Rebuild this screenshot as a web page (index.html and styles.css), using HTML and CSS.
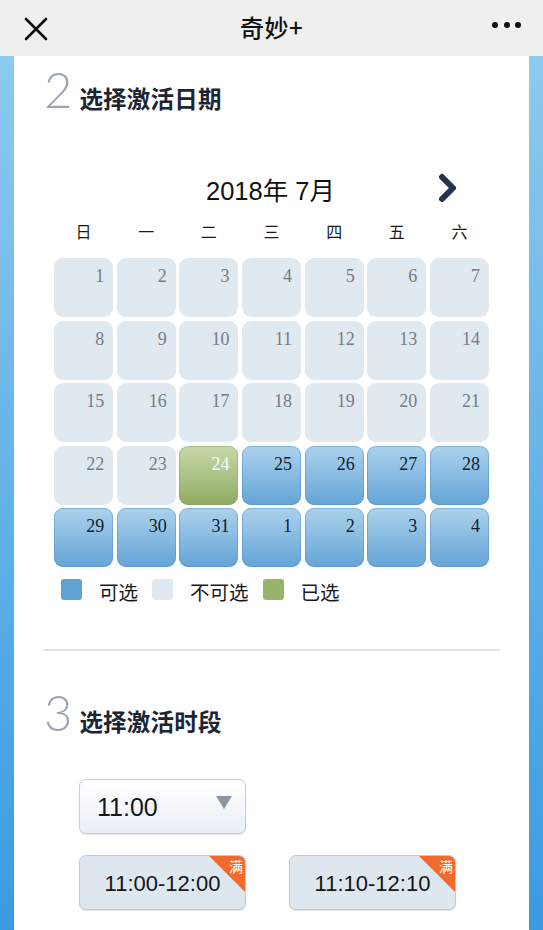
FILE: index.html
```html
<!DOCTYPE html>
<html lang="zh-CN">
<head>
<meta charset="utf-8">
<title>奇妙+</title>
<link rel="stylesheet" href="styles.css">
</head>
<body>
<header class="topbar">
  <svg class="close" width="24" height="24" viewBox="0 0 24 24"><path d="M2 2 L22 22 M22 2 L2 22" stroke="#111" stroke-width="2.6" stroke-linecap="round" fill="none"/></svg>
  <div class="title">奇妙+</div>
  <div class="dots"><i></i><i></i><i></i></div>
</header>
<main class="panel">
  <section class="step step-date">
    <h2 class="step-title"><span class="num">2</span><span class="label">选择激活日期</span></h2>
    <div class="cal">
      <div class="month">
        <span></span>
        <span class="month-text">2018年 7月</span>
        <svg class="next" width="20" height="30" viewBox="0 0 20 30"><path d="M4 4 L15 15 L4 26" stroke="#24344f" stroke-width="6" stroke-linecap="round" stroke-linejoin="round" fill="none"/></svg>
      </div>
      <div class="weekdays">
        <span>日</span><span>一</span><span>二</span><span>三</span><span>四</span><span>五</span><span>六</span>
      </div>
      <div class="days">
        <div class="day off">1</div><div class="day off">2</div><div class="day off">3</div><div class="day off">4</div><div class="day off">5</div><div class="day off">6</div><div class="day off">7</div>
        <div class="day off">8</div><div class="day off">9</div><div class="day off">10</div><div class="day off">11</div><div class="day off">12</div><div class="day off">13</div><div class="day off">14</div>
        <div class="day off">15</div><div class="day off">16</div><div class="day off">17</div><div class="day off">18</div><div class="day off">19</div><div class="day off">20</div><div class="day off">21</div>
        <div class="day off">22</div><div class="day off">23</div><div class="day sel">24</div><div class="day on">25</div><div class="day on">26</div><div class="day on">27</div><div class="day on">28</div>
        <div class="day on">29</div><div class="day on">30</div><div class="day on">31</div><div class="day on">1</div><div class="day on">2</div><div class="day on">3</div><div class="day on">4</div>
      </div>
      <div class="legend">
        <span class="sw sw-on"></span><span class="lg-text">可选</span>
        <span class="sw sw-off"></span><span class="lg-text">不可选</span>
        <span class="sw sw-sel"></span><span class="lg-text">已选</span>
      </div>
    </div>
  </section>
  <div class="divider"></div>
  <section class="step step-time">
    <h2 class="step-title"><span class="num">3</span><span class="label">选择激活时段</span></h2>
    <div class="select">
      <span class="select-val">11:00</span>
      <span class="caret"></span>
    </div>
    <div class="slots">
      <div class="slot"><span class="slot-text">11:00-12:00</span><span class="badge"></span><span class="badge-text">满</span></div>
      <div class="slot"><span class="slot-text">11:10-12:10</span><span class="badge"></span><span class="badge-text">满</span></div>
    </div>
  </section>
</main>
</body>
</html>
```

FILE: styles.css
```css
html, body {
  margin: 0;
  padding: 0;
}
body {
  width: 543px;
  min-height: 930px;
  background: linear-gradient(#93cdf0, #3a9be0);
  font-family: "Noto Sans CJK SC", "Noto Sans", sans-serif;
  color: #1b2533;
}
.topbar {
  height: 56px;
  background: #efefef;
  display: grid;
  grid-template-columns: 1fr auto 1fr;
  align-items: center;
}
.close {
  margin-left: 24px;
  margin-top: 1px;
}
.title {
  font-size: 24px;
  font-weight: 500;
  color: #111;
  line-height: 1;
  letter-spacing: 0.5px;
  margin-top: -2px;
}
.dots {
  justify-self: end;
  display: flex;
  gap: 5.5px;
  margin-right: 22px;
  margin-top: -7px;
}
.dots i {
  width: 6px;
  height: 6px;
  border-radius: 50%;
  background: #111;
  display: block;
}
.panel {
  margin: 0 14px;
  background: #fff;
  min-height: 874px;
  box-sizing: border-box;
  padding-top: 9px;
}
.step-title {
  margin: 0 0 0 30px;
  display: flex;
  align-items: baseline;
  font-weight: 700;
}
.num {
  font-family: Lato, "Open Sans", sans-serif;
  font-weight: 300;
  font-size: 49px;
  line-height: 1;
  color: #9ca6b2;
  margin-right: 7px;
}
.label {
  font-size: 23.5px;
  line-height: 1;
  color: #1b2533;
  letter-spacing: 0.2px;
}
.cal {
  margin: 0 40px;
  padding-top: 62px;
}
.month {
  display: grid;
  grid-template-columns: 1fr auto 1fr;
  align-items: center;
  height: 30px;
}
.month-text {
  font-family: "Liberation Sans", "Noto Sans CJK SC", sans-serif;
  font-size: 25.5px;
  color: #111;
  line-height: 30px;
  margin-right: 2px;
}
.next {
  justify-self: end;
  margin-right: 31px;
  margin-top: -6px;
}
.weekdays {
  display: grid;
  grid-template-columns: repeat(7, 1fr);
  column-gap: 3.5px;
  margin-top: 14px;
  height: 22px;
  line-height: 22px;
  text-align: center;
  font-size: 16px;
  color: #1a1a1a;
}
.days {
  display: grid;
  grid-template-columns: repeat(7, 1fr);
  grid-auto-rows: 59px;
  gap: 3.5px;
  margin-top: 16px;
}
.day {
  border-radius: 9px;
  text-align: right;
  padding: 8px 9px 0 0;
  font-family: "Liberation Serif", serif;
  font-size: 18px;
  line-height: 20px;
  box-sizing: border-box;
}
.off {
  background: #e0e8f0;
  color: #767c85;
}
.on {
  background: linear-gradient(#acd2ec, #64a4d6);
  color: #101c34;
  box-shadow: inset 0 0 0 1px rgba(80, 140, 195, 0.45);
}
.sel {
  background: linear-gradient(#c8d8a9, #8fab63);
  color: #fff;
  box-shadow: inset 0 0 0 1px rgba(130, 160, 90, 0.45);
}
.legend {
  display: flex;
  align-items: center;
  margin: 12px 0 0 7px;
  height: 21px;
}
.sw {
  width: 21px;
  height: 21px;
  border-radius: 3px;
  flex: none;
}
.sw-on { background: #5fa3d4; }
.sw-off { background: #e0e8f1; }
.sw-sel { background: #97b46b; }
.lg-text {
  font-size: 19.5px;
  line-height: 21px;
  color: #1a1a1a;
  margin: 4px 14px 0 17px;
}
.divider {
  height: 2px;
  background: #e2e2e2;
  margin: 49px 29px 0;
}
.step-time {
  padding-top: 37px;
}
.select {
  margin: 42px 0 0 65px;
  width: 167px;
  height: 55px;
  box-sizing: border-box;
  border: 1px solid #c5cdd6;
  border-radius: 7px;
  background: linear-gradient(#ffffff, #e8eff7);
  box-shadow: 0 1px 1px rgba(0, 0, 0, 0.12);
  display: flex;
  align-items: center;
  justify-content: space-between;
  padding: 0 13px 0 17px;
}
.select-val {
  font-family: "Liberation Sans", sans-serif;
  font-size: 25px;
  color: #161616;
  margin-top: 2px;
}
.caret {
  width: 0;
  height: 0;
  border-left: 8.5px solid transparent;
  border-right: 8.5px solid transparent;
  border-top: 13px solid #8a96a4;
  margin-top: -8px;
}
.slots {
  display: flex;
  gap: 43px;
  margin: 21px 0 0 65px;
}
.slot {
  position: relative;
  width: 167px;
  height: 55px;
  box-sizing: border-box;
  border: 1px solid #c3cad3;
  border-radius: 7px;
  background: #dee6ee;
  box-shadow: 0 1px 1px rgba(0, 0, 0, 0.12);
  overflow: hidden;
  display: flex;
  align-items: center;
  justify-content: center;
}
.slot-text {
  font-family: "Liberation Sans", sans-serif;
  font-size: 22px;
  color: #161616;
  margin-top: 2px;
}
.badge {
  position: absolute;
  top: 0;
  right: 0;
  width: 36px;
  height: 36px;
  background: #f26a2e;
  clip-path: polygon(0 0, 100% 0, 100% 100%);
}
.badge-text {
  position: absolute;
  top: 2px;
  right: 2px;
  font-size: 14px;
  line-height: 16px;
  color: #fff;
}
```
